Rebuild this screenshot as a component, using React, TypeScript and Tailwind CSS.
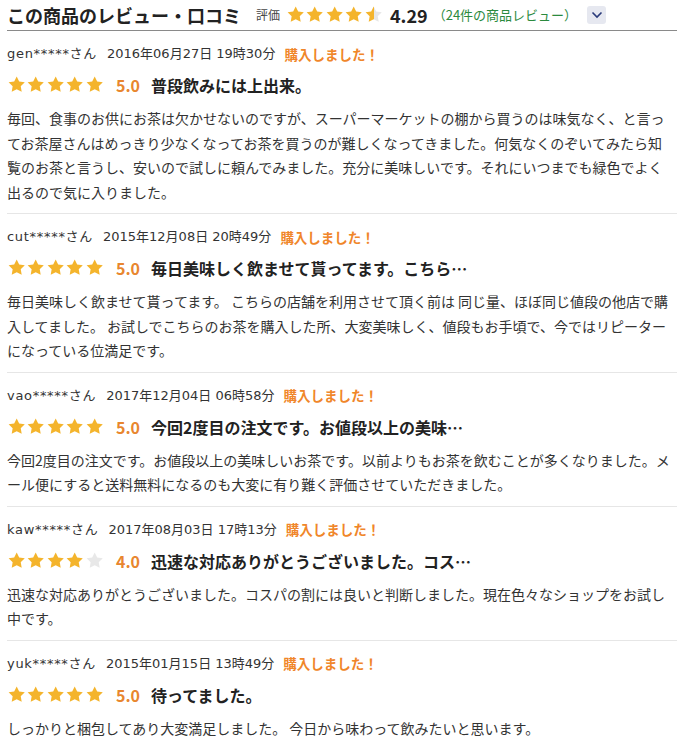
import React from "react";

const STAR = "M12 1.8l3.09 6.26 6.91 1-5 4.87 1.18 6.88L12 17.56l-6.18 3.25L7 13.93 2 9.06l6.91-1z";

function Star({ fill, size = 19.4 }: { fill: "full" | "half" | "empty"; size?: number }) {
  const id = React.useId();
  return (
    <svg width={size} height={size} viewBox="0 0 24 24" className="shrink-0">
      {fill === "half" && (
        <defs>
          <linearGradient id={id} x1="0" x2="1" y1="0" y2="0">
            <stop offset="50%" stopColor="#f4b42c" />
            <stop offset="50%" stopColor="#e6e6e6" />
          </linearGradient>
        </defs>
      )}
      <path
        d={STAR}
        fill={fill === "full" ? "#f4b42c" : fill === "empty" ? "#e8e8e8" : `url(#${id})`}
      />
    </svg>
  );
}

type Review = {
  user: string;
  date: string;
  rating: number;
  title: string;
  lines: string[];
};

const reviews: Review[] = [
  {
    user: "gen*****さん",
    date: "2016年06月27日 19時30分",
    rating: 5,
    title: "普段飲みには上出来。",
    lines: [
      "毎回、食事のお供にお茶は欠かせないのですが、スーパーマーケットの棚から買うのは味気なく、と言っ",
      "てお茶屋さんはめっきり少なくなってお茶を買うのが難しくなってきました。何気なくのぞいてみたら知",
      "覧のお茶と言うし、安いので試しに頼んでみました。充分に美味しいです。それにいつまでも緑色でよく",
      "出るので気に入りました。",
    ],
  },
  {
    user: "cut*****さん",
    date: "2015年12月08日 20時49分",
    rating: 5,
    title: "毎日美味しく飲ませて貰ってます。こちら…",
    lines: [
      "毎日美味しく飲ませて貰ってます。 こちらの店舗を利用させて頂く前は 同じ量、ほぼ同じ値段の他店で購",
      "入してました。 お試しでこちらのお茶を購入した所、大変美味しく、値段もお手頃で、今ではリピーター",
      "になっている位満足です。",
    ],
  },
  {
    user: "vao*****さん",
    date: "2017年12月04日 06時58分",
    rating: 5,
    title: "今回2度目の注文です。お値段以上の美味…",
    lines: [
      "今回2度目の注文です。お値段以上の美味しいお茶です。以前よりもお茶を飲むことが多くなりました。メ",
      "ール便にすると送料無料になるのも大変に有り難く評価させていただきました。",
    ],
  },
  {
    user: "kaw*****さん",
    date: "2017年08月03日 17時13分",
    rating: 4,
    title: "迅速な対応ありがとうございました。コス…",
    lines: [
      "迅速な対応ありがとうございました。コスパの割には良いと判断しました。現在色々なショップをお試し",
      "中です。",
    ],
  },
  {
    user: "yuk*****さん",
    date: "2015年01月15日 13時49分",
    rating: 5,
    title: "待ってました。",
    lines: ["しっかりと梱包してあり大変満足しました。 今日から味わって飲みたいと思います。"],
  },
];

export default function App() {
  return (
    <div
      className="w-[677px] min-h-[739px] bg-white pl-[7px] text-[#333]"
      style={{ fontFamily: '"Noto Sans CJK JP", "Noto Sans", sans-serif' }}
    >
      <div className="h-[31px] flex items-center border-b border-[#8a8a8a] whitespace-nowrap">
        <h2 className="text-[18px] leading-[24px] font-bold text-[#222]">この商品のレビュー・口コミ</h2>
        <span className="ml-[15px] text-[12px] text-[#444]">評価</span>
        <div className="ml-[6px] flex items-center">
          <Star fill="full" />
          <Star fill="full" />
          <Star fill="full" />
          <Star fill="full" />
          <Star fill="half" />
        </div>
        <span className="ml-[7px] text-[18px] font-bold text-[#222]">4.29</span>
        <span className="ml-[5px] text-[13px] text-[#2b8a3e]">（24件の商品レビュー）</span>
        <button className="ml-[10px] w-[19px] h-[18px] rounded-[3px] bg-[#e6e8f0] flex items-center justify-center">
          <svg width="12" height="8" viewBox="0 0 12 8">
            <path d="M1.5 1.5 L6 6 L10.5 1.5" fill="none" stroke="#2a3a7a" strokeWidth="1.6" />
          </svg>
        </button>
      </div>
      {reviews.map((r, i) => (
        <div
          key={i}
          className={`pt-[13px] pb-[9px] ${i < reviews.length - 1 ? "border-b border-[#e6e6e6]" : ""}`}
        >
          <div
            className="h-[20px] flex items-center text-[13px] whitespace-nowrap"
            style={{ fontFamily: '"DejaVu Sans", "Noto Sans CJK JP", sans-serif' }}
          >
            <span className="text-[#333] tracking-[0.7px]">{r.user}</span>
            <span className="ml-[10px] text-[#333]">{r.date}</span>
            <span
              className="ml-[9px] text-[13.5px] font-bold text-[#f0862a]"
              style={{ fontFamily: '"Noto Sans CJK JP", sans-serif' }}
            >
              購入しました！
            </span>
          </div>
          <div className="mt-[8px] h-[26px] flex items-center whitespace-nowrap">
            <div className="flex items-center">
              {[0, 1, 2, 3, 4].map((k) => (
                <Star key={k} fill={k < r.rating ? "full" : "empty"} />
              ))}
            </div>
            <span className="ml-[12px] text-[16px] font-bold text-[#e8862e]">{r.rating.toFixed(1)}</span>
            <span className="ml-[11px] text-[16px] font-bold text-[#222]">{r.title}</span>
          </div>
          <div className="mt-[8px] text-[14px] leading-[24.5px] text-[#333] whitespace-nowrap">
            {r.lines.map((l, k) => (
              <div key={k}>{l}</div>
            ))}
          </div>
        </div>
      ))}
    </div>
  );
}
